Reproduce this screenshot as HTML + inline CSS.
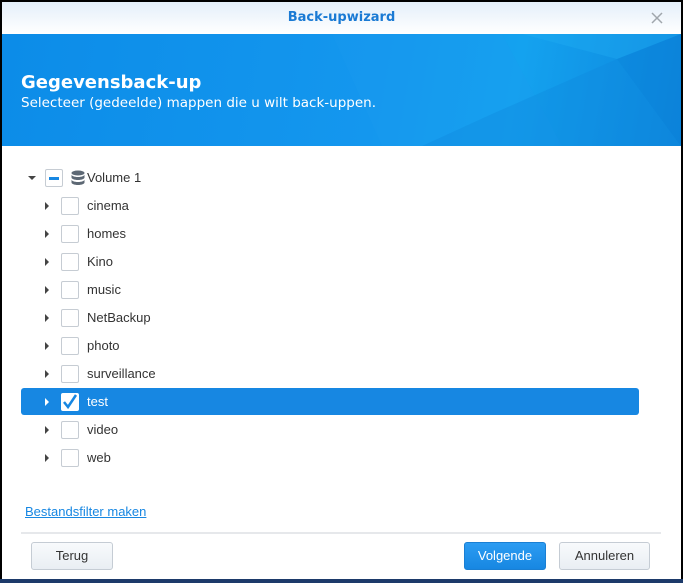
<!DOCTYPE html>
<html><head><style>
*{margin:0;padding:0;box-sizing:border-box}
body{width:683px;height:583px;background:#000;font-family:"Liberation Sans",sans-serif;position:relative;overflow:hidden}
.win{position:absolute;left:2px;top:2px;width:679px;height:577px;background:#fff}
.bot{position:absolute;left:0;top:579px;width:683px;height:4px;background:#1d3a6a}
.title{position:absolute;left:0;top:0;width:679px;height:32px;background:linear-gradient(#e4effa,#fff);text-align:center;font-weight:bold;font-size:13px;font-family:"DejaVu Sans",sans-serif;color:#1a7ad4;line-height:32px}
.ban{position:absolute;left:0;top:32px;width:679px;height:112px;background:linear-gradient(100deg,#0c8ce8 0%,#1497ee 55%,#14a2ef 75%,#0d86dc 100%);overflow:hidden}
.ban h1{position:absolute;left:19px;top:38px;color:#fff;font-size:18px;font-family:"DejaVu Sans",sans-serif}
.ban p{position:absolute;left:19px;top:61px;color:#fff;font-size:13.5px;font-family:"DejaVu Sans",sans-serif}
.row{position:absolute;left:19px;width:618px;height:27px;font-size:13px;color:#333;line-height:27px}
.row.sel{background:#1787e2;color:#fff;border-radius:3px}
.arr{position:absolute;left:24px;top:10px;width:0;height:0;border-top:4px solid transparent;border-bottom:4px solid transparent;border-left:4px solid #444}
.cb{position:absolute;left:40px;top:5px;width:18px;height:18px;border:1px solid #c6ccd3;background:#fff;border-radius:2px}
.lbl{position:absolute;left:66px}
.btn{position:absolute;top:540px;height:28px;border:1px solid #c5ccd4;border-radius:3px;background:linear-gradient(#f8fafc,#e9eef3);font-size:13px;color:#333;text-align:center;line-height:26px}
</style></head><body>
<div class="win">
<div class="title">Back-upwizard
<svg style="position:absolute;left:649px;top:10px" width="12" height="12"><path d="M1 1L11 11M11 1L1 11" stroke="#a0a6ac" stroke-width="1.5"/></svg></div>
<div class="ban">
<svg width="679" height="112" style="position:absolute;left:0;top:0">
<polygon points="330,0 500,0 560,112 380,112" fill="#1a9cf0" opacity=".25"/>
<polygon points="490,80 615,25 679,112 420,112" fill="#0f86dd" opacity=".35"/>
<polygon points="520,0 679,0 615,25" fill="#22b0f3" opacity=".35"/>
<polygon points="615,25 679,0 679,112" fill="#0a7ad4" opacity=".35"/>
</svg>
<h1>Gegevensback-up</h1><p>Selecteer (gedeelde) mappen die u wilt back-uppen.</p></div>

<div class="row" style="top:162px"><div style="position:absolute;left:7px;top:12px;border-left:4px solid transparent;border-right:4px solid transparent;border-top:4px solid #444"></div>
<div class="cb" style="left:24px"><div style="position:absolute;left:3px;top:7px;width:10px;height:3px;background:#1787e2"></div></div>
<svg style="position:absolute;left:50px;top:6px" width="14" height="16" viewBox="0 0 14 16"><g fill="#5d6874"><ellipse cx="7" cy="3" rx="6.5" ry="2.5"/><path d="M0.5 4.5v3c0 1.4 2.9 2.5 6.5 2.5s6.5-1.1 6.5-2.5v-3c0 1.4-2.9 2.5-6.5 2.5S0.5 5.9 0.5 4.5z"/><path d="M0.5 9.5v3c0 1.4 2.9 2.5 6.5 2.5s6.5-1.1 6.5-2.5v-3c0 1.4-2.9 2.5-6.5 2.5S0.5 10.9 0.5 9.5z"/></g></svg>
<span class="lbl" style="left:66px">Volume 1</span></div>

<div class="row" style="top:190px"><div class="arr"></div><div class="cb"></div><span class="lbl">cinema</span></div>
<div class="row" style="top:218px"><div class="arr"></div><div class="cb"></div><span class="lbl">homes</span></div>
<div class="row" style="top:246px"><div class="arr"></div><div class="cb"></div><span class="lbl">Kino</span></div>
<div class="row" style="top:274px"><div class="arr"></div><div class="cb"></div><span class="lbl">music</span></div>
<div class="row" style="top:302px"><div class="arr"></div><div class="cb"></div><span class="lbl">NetBackup</span></div>
<div class="row" style="top:330px"><div class="arr"></div><div class="cb"></div><span class="lbl">photo</span></div>
<div class="row" style="top:358px"><div class="arr"></div><div class="cb"></div><span class="lbl">surveillance</span></div>
<div class="row sel" style="top:386px"><div class="arr" style="border-left-color:#fff"></div><div class="cb" style="border-color:#fff"><svg width="16" height="16" style="position:absolute;left:0;top:0"><path d="M2 8l4 5L14 1" stroke="#1787e2" stroke-width="2.5" fill="none"/></svg></div><span class="lbl">test</span></div>
<div class="row" style="top:414px"><div class="arr"></div><div class="cb"></div><span class="lbl">video</span></div>
<div class="row" style="top:442px"><div class="arr"></div><div class="cb"></div><span class="lbl">web</span></div>

<div style="position:absolute;left:23px;top:502px;font-size:13px;color:#1787e2;text-decoration:underline">Bestandsfilter maken</div>
<div style="position:absolute;left:19px;top:530px;width:640px;height:2px;background:#e6e8eb"></div>
<div class="btn" style="left:29px;width:82px">Terug</div>
<div class="btn" style="left:462px;width:82px;background:linear-gradient(#2c9cf2,#1787e2);border-color:#1a7fd3;color:#fff">Volgende</div>
<div class="btn" style="left:557px;width:91px">Annuleren</div>
</div>
<div class="bot"></div>
</body></html>
